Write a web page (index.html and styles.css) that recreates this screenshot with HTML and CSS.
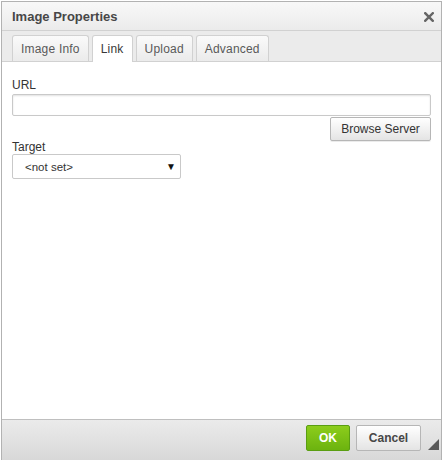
FILE: index.html
```html
<!DOCTYPE html>
<html>
<head>
<meta charset="utf-8">
<link rel="stylesheet" href="styles.css">
</head>
<body>
<div class="dialog">
  <div class="titlebar">
    <span class="title">Image Properties</span>
    <span class="close">
      <svg width="10" height="10" viewBox="0 0 10 10"><path d="M1.2 1.2 L8.8 8.8 M8.8 1.2 L1.2 8.8" stroke="#666" stroke-width="2.4" stroke-linecap="square"/></svg>
    </span>
  </div>
  <div class="tabs">
    <div class="tab">Image Info</div>
    <div class="tab active">Link</div>
    <div class="tab">Upload</div>
    <div class="tab">Advanced</div>
  </div>
  <div class="content">
    <div class="label">URL</div>
    <div class="input"></div>
    <div class="browse-row"><button class="btn">Browse Server</button></div>
    <div class="label">Target</div>
    <div class="select"><span>&lt;not set&gt;</span><span class="arrow">▼</span></div>
  </div>
  <div class="footer">
    <button class="btn-ok">OK</button>
    <button class="btn-cancel">Cancel</button>
    <span class="resize"></span>
  </div>
</div>
</body>
</html>
```
FILE: styles.css
```css
* { box-sizing: border-box; }
html, body { margin: 0; padding: 0; background: #fff; }
body { font-family: "Liberation Sans", Arial, sans-serif; font-size: 12px; color: #333; width: 443px; height: 460px; overflow: hidden; }
.dialog {
  margin: 1px 1px 0 1px;
  width: 441px;
  height: 459px;
  border: 1px solid #b2b2b2;
  border-bottom: none;
  display: flex;
  flex-direction: column;
  background: #fff;
}
.titlebar {
  height: 29px;
  background: linear-gradient(#f8f8f8, #ebebeb);
  border-bottom: 1px solid #d1d1d1;
  display: flex;
  align-items: center;
  justify-content: space-between;
  padding: 0 7px 0 10px;
}
.title { font-size: 13px; font-weight: bold; color: #474747; }
.close { width: 10px; height: 10px; display: flex; margin-top: 2px; }
.tabs {
  height: 31px;
  background: #ebebeb;
  border-bottom: 1px solid #d1d1d1;
  display: flex;
  align-items: flex-end;
  gap: 3px;
  padding-left: 10px;
}
.tab {
  height: 26px;
  padding: 0 8px;
  border: 1px solid #d1d1d1;
  border-bottom: none;
  border-radius: 3px 3px 0 0;
  background: linear-gradient(#fafafa, #ebebeb);
  color: #595959;
  display: flex;
  align-items: center;
  letter-spacing: 0.2px;
}
.tab.active {
  background: #fff;
  color: #383838;
  height: 27px;
  margin-bottom: -1px;
  padding-bottom: 1px;
}
.content {
  flex: 1;
  padding: 16px 10px 0 10px;
  display: flex;
  flex-direction: column;
}
.label { color: #333; line-height: 14px; height: 14px; }
.input {
  margin-top: 2px;
  height: 22px;
  border: 1px solid #c9c9c9;
  border-radius: 2px;
  box-shadow: inset 0 1px 2px rgba(0,0,0,0.12);
  background: #fff;
}
.browse-row { display: flex; justify-content: flex-end; margin-top: 1px; margin-bottom: -1px; }
.btn {
  font-family: inherit;
  font-size: 12px;
  color: #333;
  height: 24px;
  width: 101px;
  border: 1px solid #b6b6b6;
  border-radius: 2px;
  background: linear-gradient(#fff, #e4e4e4);
  box-shadow: 0 1px 0 rgba(0,0,0,0.08);
  padding: 0;
  margin: 0;
}
.select {
  margin-top: 0;
  width: 169px;
  height: 25px;
  border: 1px solid #c9c9c9;
  border-radius: 2px;
  display: flex;
  align-items: center;
  justify-content: space-between;
  padding: 0 4px 0 12px;
  font-size: 11.5px;
  color: #333;
}
.select .arrow { font-size: 10px; color: #111; }
.footer {
  height: 41px;
  border-top: 1px solid #bfbfbf;
  background: linear-gradient(#ebebeb, #d8d8d8);
  display: flex;
  align-items: flex-start;
  justify-content: flex-end;
  padding: 5px 20px 0 0;
  gap: 6px;
  position: relative;
}
.btn-ok, .btn-cancel {
  font-family: inherit;
  font-size: 12px;
  font-weight: bold;
  height: 26px;
  border-radius: 2px;
  padding: 0;
  margin: 0;
}
.btn-ok {
  width: 44px;
  color: #fff;
  border: 1px solid #5a9e12;
  background: linear-gradient(#8ccd1c, #6cb30f);
}
.btn-cancel {
  width: 65px;
  color: #474747;
  border: 1px solid #b6b6b6;
  background: linear-gradient(#fff, #e4e4e4);
}
.resize {
  position: absolute;
  right: 2px;
  bottom: 10px;
  width: 0;
  height: 0;
  border-left: 11px solid transparent;
  border-bottom: 11px solid #595959;
}
```
